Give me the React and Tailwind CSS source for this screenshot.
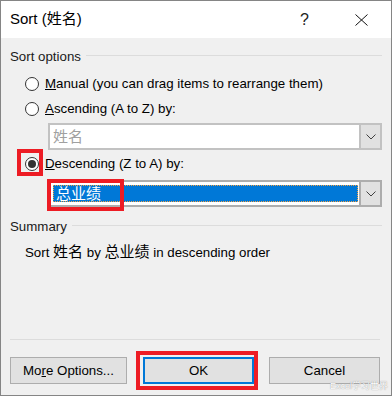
import React from 'react';

const font = { fontFamily: '"Liberation Sans", "Noto Sans CJK SC", sans-serif' };

// CJK glyphs in the dialog render larger than the Latin text
const Cjk = ({ children }) => <span className="text-[15px] leading-none">{children}</span>;

const Radio = ({ checked }) => (
    <div className="w-[14px] h-[14px] rounded-full border border-[#333333] bg-white flex items-center justify-center shrink-0">
        {checked && <div className="w-[8px] h-[8px] rounded-full bg-[#333333]" />}
    </div>
);

const Chevron = () => (
    <svg width="10" height="6" viewBox="0 0 10 6" fill="none">
        <path d="M0.5 0.5 L5 5 L9.5 0.5" stroke="#404040" strokeWidth="1" />
    </svg>
);

const GroupLabel = ({ children }) => (
    <div className="flex items-center h-[20px] mt-[9px]">
        <span className="text-[#1a1a1a]">{children}</span>
        <div className="flex-1 h-px bg-[#dcdcdc] ml-[5px] -translate-y-[2px]" />
    </div>
);

export default function App() {
    return (
        <div className="w-[392px] h-[396px] relative border border-[#858585] bg-[#f0f0f0] flex flex-col text-[13.3px] text-black" style={font}>
            {/* Title bar */}
            <div className="h-[37px] bg-white flex items-center pl-[9px] shrink-0">
                <span className="text-[15px] text-black">Sort (<span className="text-[15px]">姓名</span>)</span>
                <span className="ml-auto text-[16px] text-[#222] mr-[46px]">?</span>
                <svg width="13" height="12" viewBox="0 0 13 12" className="mr-[23px]">
                    <path d="M0.5 0.5 L12.5 11.5 M12.5 0.5 L0.5 11.5" stroke="#111" strokeWidth="1" />
                </svg>
            </div>

            {/* Body */}
            <div className="flex-1 flex flex-col pl-[9px] pr-[9px]">
                <GroupLabel>Sort options</GroupLabel>

                <div className="flex items-center h-[20px] mt-[7px] ml-[15px] gap-[6px]">
                    <Radio />
                    <span><span className="underline">M</span>anual (you can drag items to rearrange them)</span>
                </div>

                <div className="flex items-center h-[20px] mt-[5px] ml-[15px] gap-[6px]">
                    <Radio />
                    <span><span className="underline">A</span>scending (A to Z) by:</span>
                </div>

                <div className="flex h-[27px] mt-[4px] ml-[38px] border-2 border-[#c2c2c2] bg-white">
                    <div className="flex-1 flex items-center pl-[3px] text-[#a0a0a0]"><Cjk>姓名</Cjk></div>
                    <div className="w-[21px] bg-[#e1e1e1] border-l-2 border-[#c2c2c2] flex items-center justify-center">
                        <Chevron />
                    </div>
                </div>

                <div className="flex items-center h-[20px] mt-[4px] ml-[15px] gap-[6px]">
                    <div className="relative">
                        <Radio checked />
                        <div className="absolute left-[-8px] top-[-8px] w-[26px] h-[27px] border-4 border-[#ed1c24]" />
                    </div>
                    <span><span className="underline">D</span>escending (Z to A) by:</span>
                </div>

                <div className="relative flex h-[27px] mt-[6px] ml-[38px] border-2 border-[#adadad] bg-white">
                    <div className="flex-1 p-[3px] pr-[1px]">
                        <div className="h-full bg-[#0078d7] border border-dotted border-[#f5a142] flex items-center pl-[2px] text-white">
                            <Cjk>总业绩</Cjk>
                        </div>
                    </div>
                    <div className="w-[21px] bg-[#e1e1e1] border-l-2 border-[#adadad] flex items-center justify-center">
                        <Chevron />
                    </div>
                    <div className="absolute left-[-3px] top-[-3px] w-[77px] h-[32px] border-4 border-[#ed1c24]" />
                </div>

                <div className="flex items-center h-[20px] mt-[10px]">
                    <span className="text-[#1a1a1a]">Summary</span>
                    <div className="flex-1 h-px bg-[#dcdcdc] ml-[5px] -translate-y-[2px]" />
                </div>

                <div className="flex items-center h-[20px] mt-[6px] ml-[15px]">
                    <span>Sort <Cjk>姓名</Cjk> by <Cjk>总业绩</Cjk> in descending order</span>
                </div>

                <div className="h-px bg-[#dcdcdc] mt-[76px] mr-[2px]" />

                <div className="flex h-[27px] mt-[17px]">
                    <button className="w-[117px] h-full bg-[#e1e1e1] border border-[#adadad] flex items-center justify-center">
                        <span>Mo<span className="underline">r</span>e Options...</span>
                    </button>
                    <div className="relative ml-[16px]">
                        <button className="w-[111px] h-[27px] bg-[#e1e1e1] border-2 border-[#0078d7] flex items-center justify-center">
                            OK
                        </button>
                        <div className="absolute left-[-7px] top-[-6px] w-[122px] h-[39px] border-4 border-[#ed1c24]" />
                    </div>
                    <button className="w-[111px] h-full ml-[15px] bg-[#e1e1e1] border border-[#adadad] flex items-center justify-center">
                        Cancel
                    </button>
                </div>
            </div>

            {/* Watermark */}
            <div className="absolute right-[3px] bottom-[2px] text-[9px] text-white [text-shadow:0_0_1px_#777]">
                Excel学习世界
            </div>
        </div>
    );
}
